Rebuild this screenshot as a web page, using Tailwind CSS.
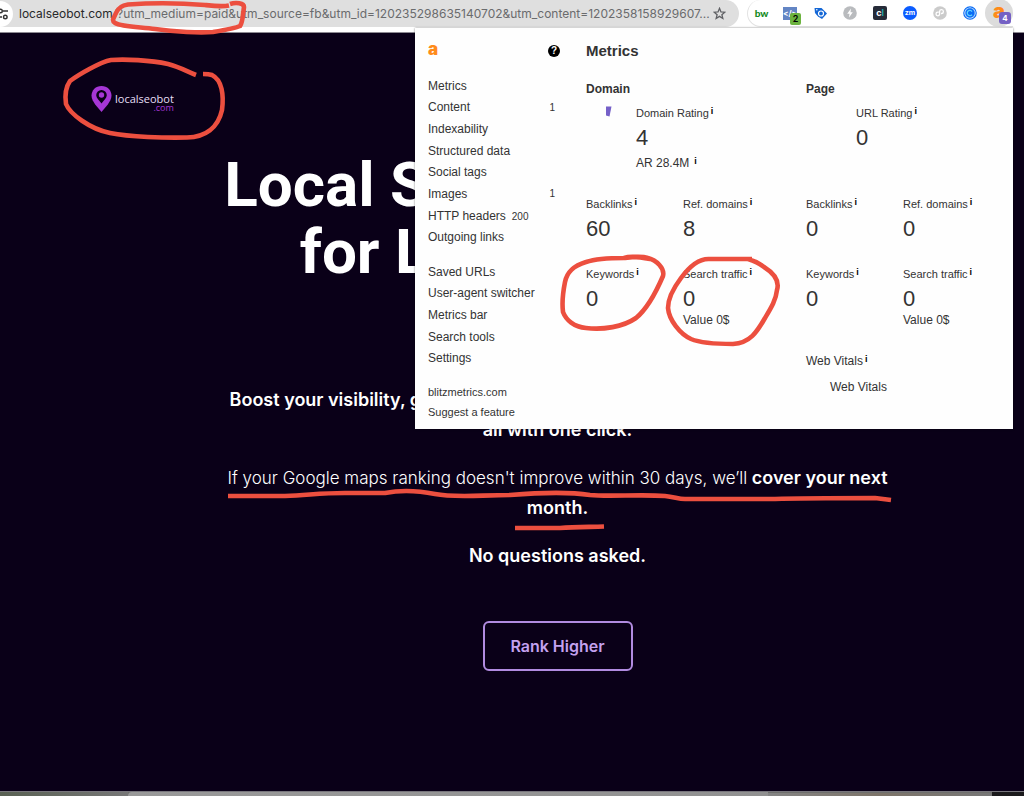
<!DOCTYPE html>
<html lang="en">
<head>
    <meta charset="UTF-8">
    <meta name="viewport" content="width=device-width, initial-scale=1.0">
    <title>Local SEO Bot</title>
    <script src="https://cdn.jsdelivr.net/npm/@tailwindcss/browser@4"></script>
</head>
<body class="relative flex flex-col min-h-screen overflow-hidden bg-[#0a0018] font-['Inter',sans-serif]">

    <!-- Browser toolbar -->
    <header class="flex items-start h-[33px] bg-white border-b border-[#8d8a92]">
        <div class="flex items-center w-[739px] h-[27px] shrink-0 bg-[#dfdfdf] rounded-r-full">
            <button aria-label="Site information" class="flex items-center justify-end w-[13px] h-[26px] pr-[5px] bg-white rounded-r-full">
                <svg class="w-[8px] h-[12px]" viewBox="0 0 8 12" fill="none" stroke="#333" stroke-width="1.4">
                    <path d="M3 3h5M0 9h2"/>
                    <circle cx="0.5" cy="3" r="1.8"/>
                    <circle cx="5.3" cy="9" r="1.8"/>
                </svg>
            </button>
            <p class="ml-[6px] w-[681px] text-[12px] leading-[16px] whitespace-nowrap text-[#6a6b6d]"><span class="text-[#27282a]">localseobot.com</span>/?utm_medium=paid&amp;utm_source=fb&amp;utm_id=120235298635140702&amp;utm_content=1202358158929607...</p>
            <button aria-label="Bookmark this page" class="ml-[13px]">
                <svg class="w-[13px] h-[13px]" viewBox="0 0 24 24" fill="none" stroke="#5f6064" stroke-width="2.4" stroke-linejoin="miter">
                    <path d="M12 2.5l2.7 6.6 7.1.5-5.4 4.6 1.7 6.9-6.1-3.8-6.1 3.8 1.7-6.9L2.200 9.600l7.100-.5z"/>
                </svg>
            </button>
        </div>
        <nav aria-label="Extensions" class="flex items-center h-[27px] ml-2 shrink-0 border-l border-b border-[#e3e3e3] rounded-l-full">
            <button class="w-[27px] text-center text-[10px] leading-[14px] font-black text-[#138a1c] font-['Lato',sans-serif]">bw</button>
            <button class="relative flex items-center justify-center w-[30px] h-[27px]">
                <span class="flex items-center justify-center w-[14px] h-[13px] bg-[#6385c4] text-[8px] leading-none font-bold text-white">&lt;/&gt;</span>
                <span class="absolute left-[15px] top-[13px] w-[11px] h-[12px] rounded-[2px] bg-[#6cb33f] text-center text-[9px] leading-[12px] font-semibold text-black">2</span>
            </button>
            <button aria-label="Tag assistant" class="flex items-center justify-center w-[30px] h-[27px]">
                <svg class="w-[13px] h-[13px]" viewBox="0 0 13 13">
                    <path d="M.5 1h7l5.500 5.500-5 5.500-4-2.500L1 6z" fill="#1467d6"/>
                    <circle cx="7" cy="6.500" r="2.500" fill="#1467d6" stroke="#fff" stroke-width="1.200"/>
                    <circle cx="2.800" cy="2.800" r=".8" fill="#fff"/>
                </svg>
            </button>
            <button aria-label="Speed" class="flex items-center justify-center w-[30px] h-[27px]">
                <svg class="w-[14px] h-[14px]" viewBox="0 0 14 14">
                    <circle cx="7" cy="7" r="6.800" fill="#b9bbbe"/>
                    <path d="M8 2.500L4.200 7.800h2.300L6 11.500l3.800-5.300H7.500z" fill="#fff"/>
                </svg>
            </button>
            <button class="flex items-center justify-center w-[30px] h-[27px]">
                <span class="w-[14px] h-[14px] rounded-[2px] bg-[#262b38] text-center text-[9px] leading-[13px] font-bold text-white">c<span class="text-[#1fa3a8]">l</span></span>
            </button>
            <button class="flex items-center justify-center w-[30px] h-[27px]">
                <span class="w-[14px] h-[14px] rounded-full bg-[#0b5cff] text-center text-[7px] leading-[14px] font-bold text-white">zm</span>
            </button>
            <button aria-label="Link" class="flex items-center justify-center w-[30px] h-[27px]">
                <svg class="w-[14px] h-[14px]" viewBox="0 0 14 14" fill="none" stroke="#fff" stroke-width="1.300">
                    <circle cx="7" cy="7" r="6.800" fill="#cbcbcb" stroke="none"/>
                    <path d="M5.800 6.200H4.800a1.800 1.800 0 1 0 1.800 1.800V5.500A1.900 1.900 0 1 1 8.500 7.500H8"/>
                </svg>
            </button>
            <button aria-label="Calendar" class="flex items-center justify-center w-[30px] h-[27px]">
                <svg class="w-[14px] h-[14px]" viewBox="0 0 14 14" fill="none">
                    <circle cx="7" cy="7" r="6.200" stroke="#0a6cf5" stroke-width="1.200"/>
                    <circle cx="7" cy="7" r="4.900" fill="#0a6cf5" stroke="#8fc4ff" stroke-width=".5"/>
                    <path d="M9 5.500A2.600 2.600 0 1 0 9 8.500" stroke="#5cd0ff" stroke-width="1.300"/>
                </svg>
            </button>
            <button class="relative flex items-center justify-center w-7 h-7 rounded-full bg-[#dcdcdc] text-[20px] leading-none font-black text-[#ff8b1a]">
                <span class="pb-1">a</span>
                <span class="absolute left-[14px] top-[13px] w-[12px] h-[12px] rounded-[3px] bg-[#7460c4] text-center text-[8px] leading-[12px] font-bold text-white">4</span>
            </button>
        </nav>
    </header>

    <!-- Landing page -->
    <main class="flex-1 pl-[91px] text-center text-white">
        <a href="#" class="flex w-fit h-[26px] mt-[53px] text-left">
            <svg class="w-[21px] h-[26px]" viewBox="0 0 21 26">
                <path d="M10.500 0C4.700 0 .5 4.200.5 9.800c0 3.300 1.800 6 3.700 8.600L10.500 26l6.300-7.600c1.900-2.600 3.700-5.300 3.700-8.600C20.500 4.200 16.300 0 10.500 0z" fill="#a636d6"/>
                <path d="M10.500 4a5.300 5.300 0 0 0-5.300 5.300c0 2.500 3 5.200 5.300 8.200 2.300-3 5.300-5.700 5.300-8.200A5.300 5.300 0 0 0 10.500 4z" fill="#0a0018"/>
                <circle cx="10.500" cy="9" r="2.700" fill="#a636d6"/>
            </svg>
            <span class="flex flex-col ml-[3px] pt-[7px] font-['Open_Sans',sans-serif]">
                <span class="text-[11px] leading-[11px] font-medium text-[#e6dff5]">localseobot</span>
                <span class="text-[9px] leading-[7px] text-right font-medium text-[#a636d6]">.com</span>
            </span>
        </a>

        <h1 class="mt-[39px] text-[62px] leading-[67px] font-bold whitespace-nowrap font-['Roboto',sans-serif]">Local SEO on Auto-Pilot<br>for Local Business</h1>

        <div class="mt-[100px] text-[18px] leading-[30px]">
            <p class="font-semibold">Boost your visibility, generate more leads, and rank higher on Google Maps,<br>all with one click.</p>
            <p class="mt-[18px] font-semibold"><span class="text-[17px] font-light">If your Google maps ranking doesn't improve within 30 days, we’ll</span> cover your next<br>month.</p>
            <p class="mt-[18px] font-semibold">No questions asked.</p>
        </div>

        <button class="mt-[50px] w-[150px] h-[50px] rounded-[6px] border-2 border-[#b18be0] text-[16px] leading-6 font-semibold text-[#c4a2ef]">Rank Higher</button>
    </main>

    <!-- Top edge of the dock -->
    <footer class="flex h-[5px] border-t border-[#77757c] bg-[#6f6f6d]">
        <div class="w-1/8 bg-linear-to-r from-[#596153] to-[#777]"></div>
        <div class="w-5/8 rounded-tl-[4px] bg-linear-to-r from-[#999] to-[#919191]"></div>
        <div class="flex-1 mt-px rounded-tr-[4px] bg-linear-to-r from-[#858585] via-[#7d7469] to-[#777]"></div>
        <div class="w-8 bg-[#1b1a1c]"></div>
    </footer>

    <!-- Extension popup -->
    <section class="absolute top-[28px] left-[415px] flex w-[598px] h-[401px] pl-[13px] pt-3 bg-[#fefefe] shadow-[0_0_2px_rgba(0,0,0,0.5)] text-[#333] font-['Liberation_Sans',sans-serif]">
        <aside class="w-[132px] text-[12px]">
            <div class="flex items-center justify-between h-[22px]">
                <a href="#" class="text-[17px] leading-[18px] pb-1 font-black text-[#ff8b1a] font-['Inter',sans-serif]">a</a>
                <button aria-label="Help" class="w-3 h-3 rounded-full bg-black text-center text-[10px] leading-3 font-bold text-white">?</button>
            </div>
            <ul class="grid auto-rows-fr items-center h-[173px] mt-[13px]">
                <li><a href="#">Metrics</a></li>
                <li class="flex items-center justify-between pr-[5px]"><a href="#">Content</a><span class="text-[10px]">1</span></li>
                <li><a href="#">Indexability</a></li>
                <li><a href="#">Structured data</a></li>
                <li><a href="#">Social tags</a></li>
                <li class="flex items-center justify-between pr-[5px]"><a href="#">Images</a><span class="text-[10px]">1</span></li>
                <li><a href="#">HTTP headers</a><span class="ml-[6px] text-[10px]">200</span></li>
                <li><a href="#">Outgoing links</a></li>
            </ul>
            <ul class="grid auto-rows-fr items-center h-[108px] mt-[13px]">
                <li><a href="#">Saved URLs</a></li>
                <li><a href="#">User-agent switcher</a></li>
                <li><a href="#">Metrics bar</a></li>
                <li><a href="#">Search tools</a></li>
                <li><a href="#">Settings</a></li>
            </ul>
            <ul class="mt-[13px] text-[11px] leading-5">
                <li><a href="#">blitzmetrics.com</a></li>
                <li><a href="#">Suggest a feature</a></li>
            </ul>
        </aside>

        <div class="ml-[26px] flex-1 text-[11px] leading-4">
            <h2 class="text-[15px] leading-[22px] font-bold">Metrics</h2>
            <div class="grid grid-cols-[220px_1fr] mt-[19px]">
                <div>
                    <h3 class="text-[12px] leading-4 font-bold">Domain</h3>
                    <div class="flex h-[66px] mt-2">
                        <svg class="w-[50px] h-4" viewBox="0 0 50 16"><path d="M20 1.500h5.500L23.500 11.500l-3.500-1z" fill="#7560c8"/></svg>
                        <div>
                            <p>Domain Rating<span class="ml-[2px] align-[3px] text-[9px] leading-none font-bold text-black">i</span></p>
                            <p class="mt-[3px] text-[22px] leading-7">4</p>
                            <p class="mt-[3px] text-[12px]">AR 28.4M<span class="ml-[5px] align-[3px] text-[9px] leading-none font-bold text-black">i</span></p>
                        </div>
                    </div>
                    <div class="grid grid-cols-[97px_1fr] mt-[25px]">
                        <div class="h-[70px]">
                            <p>Backlinks<span class="ml-[2px] align-[3px] text-[9px] leading-none font-bold text-black">i</span></p>
                            <p class="mt-[3px] text-[22px] leading-7">60</p>
                        </div>
                        <div class="h-[70px]">
                            <p>Ref. domains<span class="ml-[2px] align-[3px] text-[9px] leading-none font-bold text-black">i</span></p>
                            <p class="mt-[3px] text-[22px] leading-7">8</p>
                        </div>
                        <div>
                            <p>Keywords<span class="ml-[2px] align-[3px] text-[9px] leading-none font-bold text-black">i</span></p>
                            <p class="mt-[3px] text-[22px] leading-7">0</p>
                        </div>
                        <div>
                            <p>Search traffic<span class="ml-[2px] align-[3px] text-[9px] leading-none font-bold text-black">i</span></p>
                            <p class="mt-[3px] text-[22px] leading-7">0</p>
                            <p class="-mt-px text-[12px]">Value 0$</p>
                        </div>
                    </div>
                </div>
                <div>
                    <h3 class="text-[12px] leading-4 font-bold">Page</h3>
                    <div class="h-[66px] mt-2 pl-[50px]">
                        <p>URL Rating<span class="ml-[2px] align-[3px] text-[9px] leading-none font-bold text-black">i</span></p>
                        <p class="mt-[3px] text-[22px] leading-7">0</p>
                    </div>
                    <div class="grid grid-cols-[97px_1fr] mt-[25px]">
                        <div class="h-[70px]">
                            <p>Backlinks<span class="ml-[2px] align-[3px] text-[9px] leading-none font-bold text-black">i</span></p>
                            <p class="mt-[3px] text-[22px] leading-7">0</p>
                        </div>
                        <div class="h-[70px]">
                            <p>Ref. domains<span class="ml-[2px] align-[3px] text-[9px] leading-none font-bold text-black">i</span></p>
                            <p class="mt-[3px] text-[22px] leading-7">0</p>
                        </div>
                        <div>
                            <p>Keywords<span class="ml-[2px] align-[3px] text-[9px] leading-none font-bold text-black">i</span></p>
                            <p class="mt-[3px] text-[22px] leading-7">0</p>
                        </div>
                        <div>
                            <p>Search traffic<span class="ml-[2px] align-[3px] text-[9px] leading-none font-bold text-black">i</span></p>
                            <p class="mt-[3px] text-[22px] leading-7">0</p>
                            <p class="-mt-px text-[12px]">Value 0$</p>
                        </div>
                    </div>
                    <p class="mt-[25px] text-[12px]">Web Vitals<span class="ml-[2px] align-[3px] text-[9px] leading-none font-bold text-black">i</span></p>
                    <p class="mt-[10px] pl-6 text-[12px]">Web Vitals</p>
                </div>
            </div>
        </div>
    </section>

    <!-- Red marker strokes -->
    <svg class="absolute top-0 left-0 w-[1024px] h-[796px] pointer-events-none" viewBox="0 0 1024 796" fill="none" stroke="#ec4f3f" stroke-width="4.600" stroke-linejoin="round">
        <path d="M229 5.500C222 7 214 6 205 5C180 3 150 3 128 4.500C121 5.500 118 8 116 13C114 18 111 20 115 23C122 27 140 27 155 29C175 32 200 33 213 32C225 30 236 28 240 26C243 22 243 13 244 7C244 3 236 2 230 4"/>
        <path d="M196 75C188 72 180 67 168 64C150 60 125 59 111 60C100 62 78 75 70 81C65 88 65 97 66 104C70 114 90 129 110 133C130 137 165 138 187 137.500C205 137 218 128 222 110C224 95 222 80 212 75C209 74 206 74 203 74"/>
        <path d="M650 259C640 257 630 256 624 258C605 258 595 259 586 262C573 266 567 272 565 282C563 292 562 304 563 312C566 320 574 327 586 328C603 330 623 327 636 318C647 309 657 290 663 276C665 268 656 260 648 258C641 256 632 257 625 258"/>
        <path d="M752 259H710C698 258 689 267 681 278C672 290 668 300 668 308C669 320 680 334 691 339C703 344 722 344 733 344C750 343 757 332 765 318C771 308 776 300 777 290C780 280 772 272 764 267C759 263 755 261 748 259"/>
        <path d="M228 496H285C310 495 320 493 345 493H385C400 490 420 491 435 494C455 498 480 495 510 495C535 493 570 492 590 495C610 497 640 494 665 496C675 497 678 499 685 499H775C800 498 850 498 875 498L891 500"/>
        <path d="M515 528H560C575 527 590 527 604 526.500"/>
    </svg>
</body>
</html>
